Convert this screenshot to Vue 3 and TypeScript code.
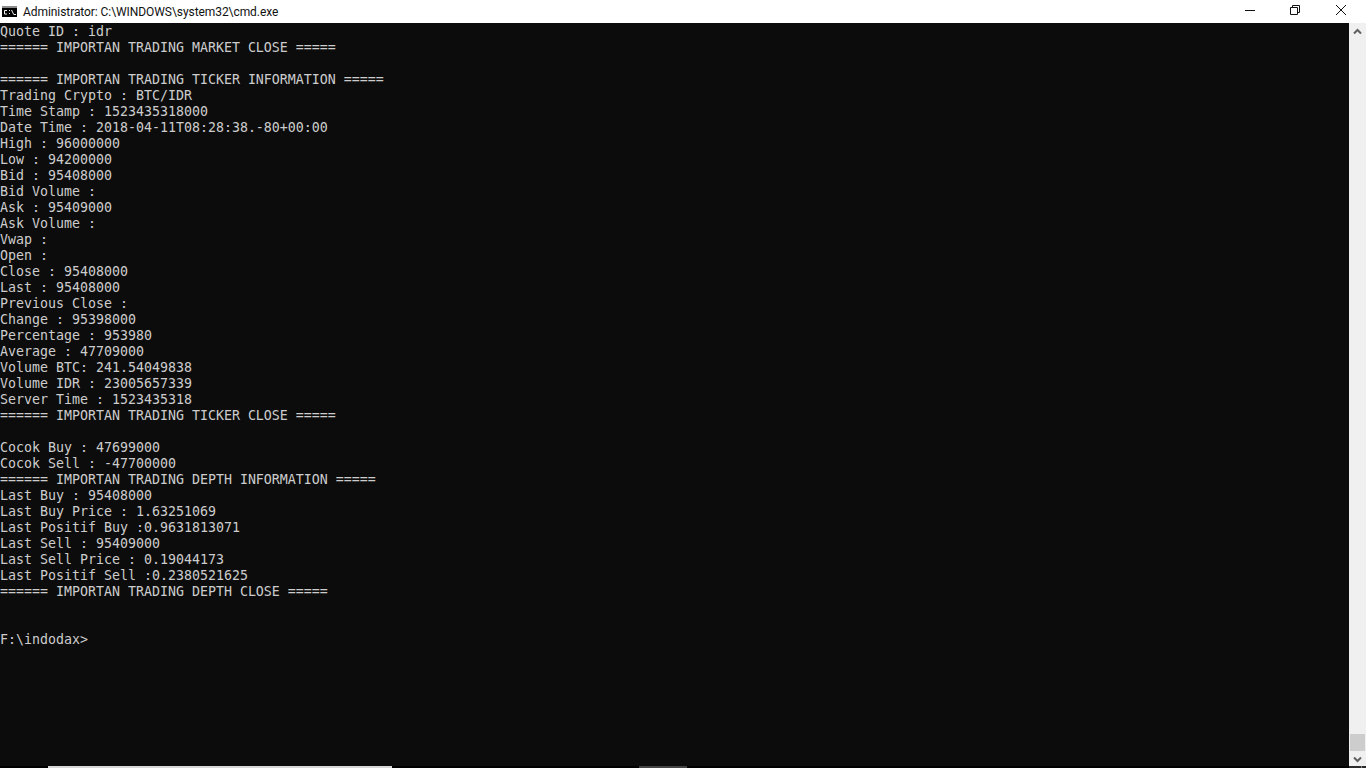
<script setup lang="ts">
const lines: string[] = [
  'Quote ID : idr',
  '====== IMPORTAN TRADING MARKET CLOSE =====',
  '',
  '====== IMPORTAN TRADING TICKER INFORMATION =====',
  'Trading Crypto : BTC/IDR',
  'Time Stamp : 1523435318000',
  'Date Time : 2018-04-11T08:28:38.-80+00:00',
  'High : 96000000',
  'Low : 94200000',
  'Bid : 95408000',
  'Bid Volume :',
  'Ask : 95409000',
  'Ask Volume :',
  'Vwap :',
  'Open :',
  'Close : 95408000',
  'Last : 95408000',
  'Previous Close :',
  'Change : 95398000',
  'Percentage : 953980',
  'Average : 47709000',
  'Volume BTC: 241.54049838',
  'Volume IDR : 23005657339',
  'Server Time : 1523435318',
  '====== IMPORTAN TRADING TICKER CLOSE =====',
  '',
  'Cocok Buy : 47699000',
  'Cocok Sell : -47700000',
  '====== IMPORTAN TRADING DEPTH INFORMATION =====',
  'Last Buy : 95408000',
  'Last Buy Price : 1.63251069',
  'Last Positif Buy :0.9631813071',
  'Last Sell : 95409000',
  'Last Sell Price : 0.19044173',
  'Last Positif Sell :0.2380521625',
  '====== IMPORTAN TRADING DEPTH CLOSE =====',
  '',
  '',
  'F:\\indodax>',
]
</script>

<template>
  <div class="window">
    <header class="titlebar">
      <div class="title-left">
        <svg class="app-icon" width="16" height="15" viewBox="0 0 16 15">
          <rect x="0" y="2" width="15" height="11" fill="#000" />
          <rect x="0" y="2" width="15" height="2" fill="#8c8c8c" />
          <path d="M5 6.500H2.500v3.500H5M7 6.500h1M7 9.500h1M9.500 6l2 4M11.500 10.500h2.500" stroke="#f0f0f0" stroke-width="1" fill="none" />
        </svg>
        <span class="title-text">Administrator: C:\WINDOWS\system32\cmd.exe</span>
      </div>
      <div class="controls">
        <div class="control">
          <svg width="12" height="10" viewBox="0 0 12 10"><path d="M2 5.500h10" stroke="#111" fill="none" /></svg>
        </div>
        <div class="control">
          <svg width="10" height="10" viewBox="0 0 10 10"><path d="M.5 2.500h7v7h-7zM2.500 2.500V.5h7v7h-2" stroke="#111" fill="none" /></svg>
        </div>
        <div class="control">
          <svg width="10" height="10" viewBox="0 0 10 10"><path d="M0 0l10 10M10 0L0 10" stroke="#111" fill="none" /></svg>
        </div>
      </div>
    </header>
    <div class="body">
      <main class="console">
        <div v-for="(line, i) in lines" :key="i" class="line">{{ line }}</div>
      </main>
      <aside class="scrollbar">
        <svg class="arrow" width="17" height="17" viewBox="0 0 17 17"><path d="M5 10.500L8.500 7l3.500 3.500" stroke="#606060" stroke-width="2" fill="none" /></svg>
        <div class="track"><div class="thumb"></div></div>
        <svg class="arrow" width="17" height="15" viewBox="0 0 17 15"><path d="M5 6.500L8.500 10 12 6.500" stroke="#606060" stroke-width="2" fill="none" /></svg>
      </aside>
    </div>
    <footer class="taskstrip">
      <div class="strip-light"></div>
      <div class="strip-dark"></div>
      <div class="strip-corner"><span class="strip-tick"></span></div>
    </footer>
  </div>
</template>

<style>
html, body { margin: 0; background: #0c0c0c; overflow: hidden; }
</style>

<style scoped>
.window {
  width: 1366px;
  height: 768px;
  display: flex;
  flex-direction: column;
  overflow: hidden;
}
.titlebar {
  height: 23px;
  flex: none;
  background: #fff;
  display: flex;
  justify-content: space-between;
}
.title-left {
  display: flex;
  align-items: center;
  padding-left: 2px;
  gap: 5px;
}
.app-icon { flex: none; }
.title-text {
  font: 12px Roboto, "Open Sans", sans-serif;
  letter-spacing: -0.07px;
  color: #111;
}
.controls {
  display: flex;
  padding-right: 2px;
}
.control {
  width: 46px;
  height: 20px;
  display: flex;
  align-items: center;
  justify-content: center;
}
.body {
  flex: 1;
  min-height: 0;
  display: flex;
}
.console {
  flex: 1;
  background: #0c0c0c;
  color: #cccccc;
  font: 13.29px/16px "DejaVu Sans Mono", monospace;
  padding-top: 1px;
  overflow: hidden;
}
.line {
  height: 16px;
  white-space: pre;
}
.scrollbar {
  width: 17px;
  flex: none;
  background: #f0f0f0;
  display: flex;
  flex-direction: column;
}
.arrow { flex: none; }
.track {
  flex: 1;
  display: flex;
  flex-direction: column;
  justify-content: flex-end;
  padding: 0 1px;
}
.thumb {
  height: 17px;
  background: #cdcdcd;
}
.taskstrip {
  height: 2px;
  flex: none;
  background: #000;
  display: flex;
  padding-left: 48px;
}
.strip-light {
  width: 344px;
  background: #d8d8d8;
}
.strip-dark {
  width: 48px;
  margin-left: 247px;
  background: #444;
}
.strip-corner {
  width: 17px;
  margin-left: auto;
  background: #2b2b2b;
  display: flex;
  padding-left: 12px;
  box-sizing: border-box;
}
.strip-tick {
  width: 1px;
  background: #888;
}
</style>
